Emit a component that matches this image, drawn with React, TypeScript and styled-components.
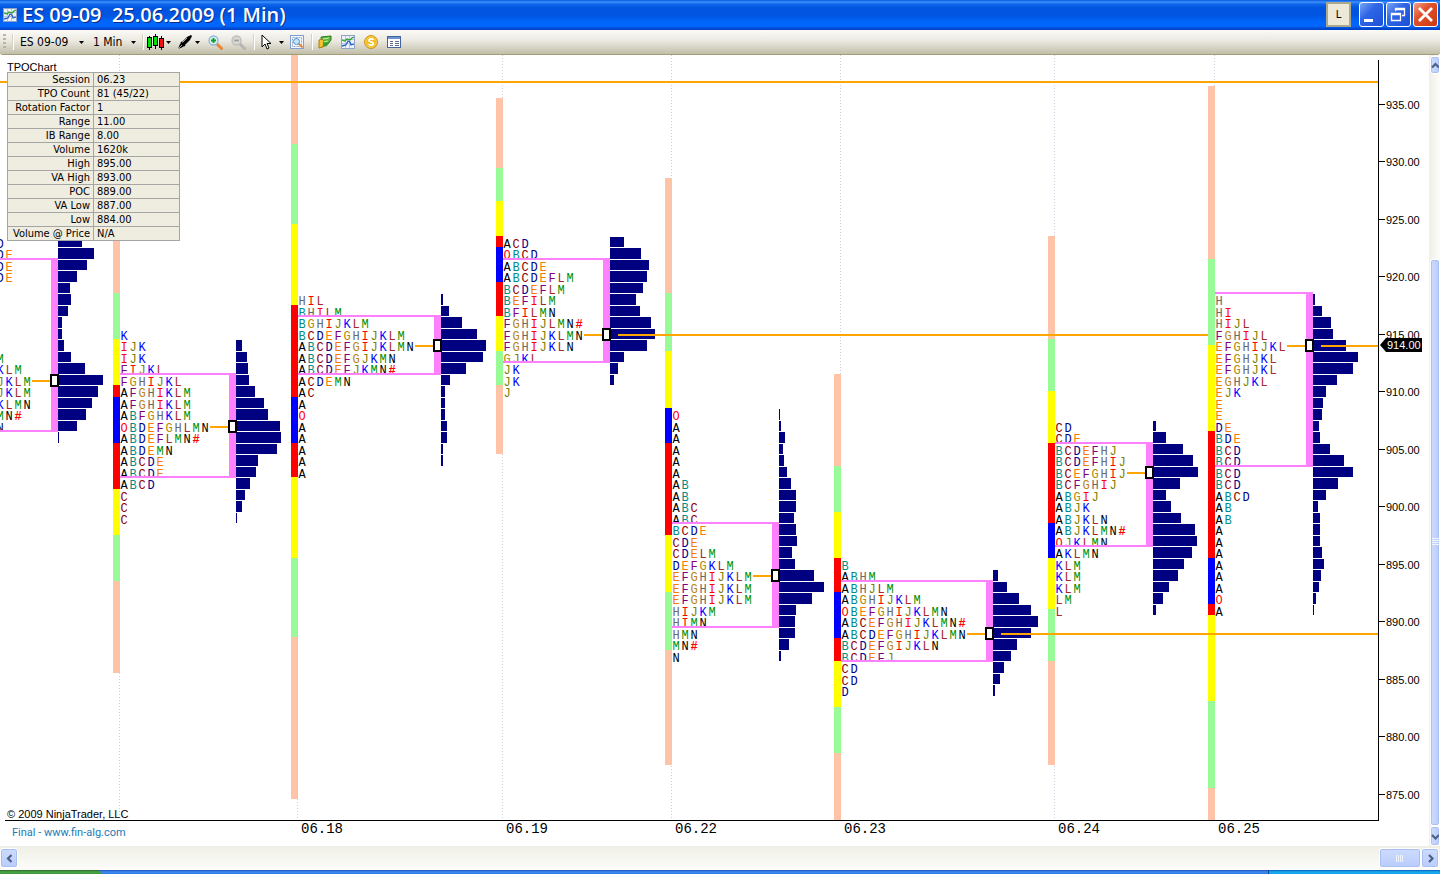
import React from "react";
import styled, { createGlobalStyle } from "styled-components";

const GlobalStyle = createGlobalStyle`
  *, *::before, *::after { box-sizing: border-box; }
  html, body { margin: 0; padding: 0; }
  body { background: #fff; font-family: "DejaVu Sans Condensed", "Noto Sans", sans-serif; font-size: 11px; color: #000; }
  button, select { font: inherit; color: inherit; border: 0; padding: 0; margin: 0; background: none; }
`;

/* ---------- data ---------- */

type Band = "s" | "g" | "y" | "r" | "b";

interface Session {
  date: string;
  stripX: number;
  stripTop: number;
  strip: [Band, number][];
  letterX: number;
  letterTop: number;
  letters: string[];
  volumeX: number;
  volumeTop: number;
  volume: number[];
  vaHigh: number;
  vaLow: number;
  poc: number;
  extendTo?: string;
}

const BAND_FILL: Record<Band, string> = {
  s: "#ffc4a8",
  g: "#98fb98",
  y: "#ffff00",
  r: "#ff0000",
  b: "#0000ff",
};

const LETTER_FILL: Record<string, string> = {
  A: "#000000",
  B: "#008b8b",
  C: "#8b0000",
  D: "#00008b",
  E: "#f57c00",
  F: "#800080",
  G: "#b8860b",
  H: "#696969",
  I: "#ff0000",
  J: "#808000",
  K: "#0000ff",
  L: "#a52a2a",
  M: "#009000",
  N: "#000000",
  O: "#ff0000",
  "#": "#ff0000",
};

const SESSIONS: Session[] = [
  {
    date: "",
    stripX: -60,
    stripTop: 60,
    strip: [],
    letterX: -3,
    letterTop: 923,
    letters: ["D", "DE", "DE", "DE", "", "", "", "", "", "", "M", "KLM", "JKLM", "JKLM", "KLMN", "MN#", "N"],
    volumeX: 58,
    volumeTop: 923,
    volume: [24, 36, 29, 19, 12, 13, 10, 4, 4, 6, 13, 27, 45, 40, 34, 28, 19, 1],
    vaHigh: 921,
    vaLow: 907,
    poc: 911,
  },
  {
    date: "",
    stripX: 113,
    stripTop: 200,
    strip: [["s", 293], ["g", 339], ["y", 385], ["r", 397], ["b", 443], ["r", 489], ["y", 535], ["g", 581], ["s", 673]],
    letterX: 121,
    letterTop: 915,
    letters: ["K", "IJK", "IJK", "FIJKL", "FGHIJKL", "AFGHIKLM", "AFGHIKLM", "ABFGHKLM", "OBDEFGHLMN", "ABDEFLMN#", "ABDEMN", "ABCDE", "ABCDE", "ABCD", "C", "C", "C"],
    volumeX: 236,
    volumeTop: 914,
    volume: [6, 11, 12, 13, 19, 28, 32, 44, 45, 41, 22, 20, 14, 9, 6, 1],
    vaHigh: 911,
    vaLow: 903,
    poc: 907,
  },
  {
    date: "06.18",
    stripX: 291,
    stripTop: 55,
    strip: [["s", 144], ["g", 224], ["y", 305], ["r", 397], ["b", 443], ["r", 477], ["y", 558], ["g", 637], ["s", 799]],
    letterX: 299,
    letterTop: 918,
    letters: ["HIL", "BHILM", "BGHIJKLM", "BCDEFGHIJKLM", "ABCDEFGIJKLMN", "ABCDEFGJKMN", "ABCDEFJKMN#", "ACDEMN", "AC", "A", "O", "A", "A", "A", "A", "A"],
    volumeX: 441,
    volumeTop: 918,
    volume: [2, 8, 21, 36, 45, 42, 25, 9, 4, 4, 4, 6, 6, 2, 2],
    vaHigh: 916,
    vaLow: 912,
    poc: 914,
  },
  {
    date: "06.19",
    stripX: 496,
    stripTop: 98,
    strip: [["s", 168], ["g", 201], ["y", 236], ["r", 247], ["b", 282], ["r", 316], ["y", 351], ["g", 385], ["s", 454]],
    letterX: 504,
    letterTop: 923,
    letters: ["ACD", "OBCD", "ABCDE", "ABCDEFLM", "BCDEFLM", "BEFILM", "BFILMN", "FGHIJLMN#", "FGHIJKLMN", "FGHIJKLN", "GJKL", "JK", "JK", "J"],
    volumeX: 610,
    volumeTop: 923,
    volume: [14, 31, 39, 37, 33, 26, 30, 41, 45, 37, 14, 8, 4],
    vaHigh: 921,
    vaLow: 913,
    poc: 915,
    extendTo: "1208",
  },
  {
    date: "06.22",
    stripX: 665,
    stripTop: 178,
    strip: [["s", 293], ["g", 351], ["y", 408], ["b", 443], ["r", 535], ["y", 592], ["g", 650], ["s", 765]],
    letterX: 673,
    letterTop: 908,
    letters: ["O", "A", "A", "A", "A", "A", "AB", "AB", "ABC", "ABC", "BCDE", "CDE", "CDELM", "DEFGKLM", "EFGHIJKLM", "EFGHIJKLM", "EFGHIJKLM", "HIJKM", "HIMN", "HMN", "MN#", "N"],
    volumeX: 779,
    volumeTop: 908,
    volume: [1, 2, 6, 4, 5, 8, 12, 17, 17, 15, 17, 18, 13, 16, 35, 45, 33, 17, 16, 16, 10, 2],
    vaHigh: 898,
    vaLow: 890,
    poc: 894,
  },
  {
    date: "06.23",
    stripX: 834,
    stripTop: 374,
    strip: [["s", 466], ["g", 512], ["y", 558], ["r", 592], ["b", 638], ["r", 661], ["y", 707], ["g", 753], ["s", 820]],
    letterX: 842,
    letterTop: 895,
    letters: ["B", "ABHM", "ABHJLM", "ABGHIJKLM", "OBEFGHIJKLMN", "ABCEFGHIJKLMN#", "ABCDEFGHIJKLMN", "BCDEFGIJKLN", "BCDEFJ", "CD", "CD", "D"],
    volumeX: 993,
    volumeTop: 894,
    volume: [5, 14, 26, 38, 45, 38, 24, 18, 11, 7, 2],
    vaHigh: 893,
    vaLow: 887,
    poc: 889,
    extendTo: "100%",
  },
  {
    date: "06.24",
    stripX: 1048,
    stripTop: 236,
    strip: [["s", 339], ["g", 391], ["y", 443], ["r", 523], ["b", 558], ["y", 609], ["g", 661], ["s", 765]],
    letterX: 1056,
    letterTop: 907,
    letters: ["CD", "CDE", "BCDEFHJ", "BCDEFHIJ", "BCEFGHIJ", "BCFGHIJ", "ABGIJ", "ABJK", "ABJKLN", "ABJKLMN#", "OJKLMN", "AKLMN", "KLM", "KLM", "KLM", "LM", "L"],
    volumeX: 1153,
    volumeTop: 907,
    volume: [3, 13, 30, 40, 45, 27, 13, 18, 28, 42, 44, 39, 31, 25, 16, 10, 3],
    vaHigh: 905,
    vaLow: 897,
    poc: 903,
  },
  {
    date: "06.25",
    stripX: 1208,
    stripTop: 86,
    strip: [["s", 259], ["g", 345], ["y", 431], ["r", 558], ["b", 604], ["r", 615], ["y", 701], ["g", 788], ["s", 820]],
    letterX: 1216,
    letterTop: 918,
    letters: ["H", "HI", "HIJL", "FGHIJL", "EFGHIJKL", "EFGHJKL", "EFGHJKL", "EGHJKL", "EJK", "E", "E", "DE", "BDE", "BCD", "BCD", "BCD", "BCD", "ABCD", "AB", "AB", "A", "A", "A", "A", "A", "A", "O", "A"],
    volumeX: 1313,
    volumeTop: 918,
    volume: [2, 9, 18, 20, 33, 45, 40, 24, 13, 10, 9, 6, 7, 17, 31, 40, 25, 13, 5, 7, 7, 7, 9, 11, 8, 6, 3, 1],
    vaHigh: 918,
    vaLow: 904,
    poc: 914,
    extendTo: "100%",
  },
];

const STATS: [string, string][] = [
  ["Session", "06.23"],
  ["TPO Count", "81 (45/22)"],
  ["Rotation Factor", "1"],
  ["Range", "11.00"],
  ["IB Range", "8.00"],
  ["Volume", "1620k"],
  ["High", "895.00"],
  ["VA High", "893.00"],
  ["POC", "889.00"],
  ["VA Low", "887.00"],
  ["Low", "884.00"],
  ["Volume @ Price", "N/A"],
];

const PRICES = [935, 930, 925, 920, 915, 910, 905, 900, 895, 890, 885, 880, 875];

const HEADER = 55;
const CELL = 9;
const rowTop = (price: number) => Math.round(340.25 + (914 - price) * 11.5);

/* ---------- window frame ---------- */

const Window = styled.div`
  display: grid;
  grid-template-rows: 30px 25px minmax(0, 1fr) 24px 4px;
  height: 100vh;
  overflow: hidden;
`;

const TitleBar = styled.header`
  display: flex;
  align-items: center;
  gap: 2px;
  padding: 0 2px 1px 3px;
  background: linear-gradient(#0a55dc 0, #3a93ff 2px, #1267ea 4px, #0054df 8px, #0054e0 15px, #0066fb 22px, #0067ff 26px, #0050d8 28px, #003cc0 30px);
  color: #fff;
`;

const Title = styled.h1`
  flex: 1;
  margin: 0 0 0 3px;
  font: 600 20px/30px "Open Sans", "Noto Sans", sans-serif;
  white-space: pre;
  text-shadow: 1px 1px 0 #0a2a8c;
`;

const LinkButton = styled.button`
  width: 25px;
  height: 25px;
  margin-right: 6px;
  border: 2px solid #aca78f;
  background: #ece9d8;
  color: #000;
`;

const CaptionButton = styled.button<{ $danger?: boolean }>`
  display: grid;
  place-items: center;
  width: 25px;
  height: 25px;
  border: 1px solid #fff;
  border-radius: 3px;
  background: ${(p) =>
    p.$danger
      ? "linear-gradient(135deg, #f0a18a, #e0512b 40%, #c93a12)"
      : "linear-gradient(135deg, #7aa5f5, #2f66e6 40%, #1c4fd6)"};
`;

const Toolbar = styled.div`
  display: flex;
  align-items: center;
  padding-left: 3px;
  border-bottom: 1px solid #a09d78;
  border-radius: 0 0 3px 3px;
  background: linear-gradient(#fbfaf7, #ebe9e0 45%, #c1bea9);
`;

const Grip = styled.span`
  width: 3px;
  height: 16px;
  background: repeating-linear-gradient(#b9b6a4 0 2px, transparent 2px 4px);
`;

const Separator = styled.span<{ $before?: number; $after?: number }>`
  width: 1px;
  height: 16px;
  margin: 0 ${(p) => p.$after ?? 4}px 0 ${(p) => p.$before ?? 7}px;
  background: #fff;
  box-shadow: -1px 0 0 #d5d2c2;
`;

const Picker = styled.label<{ $width: number; $after?: number }>`
  display: grid;
  grid-template-columns: minmax(0, 1fr);
  align-items: center;
  width: ${(p) => p.$width}px;
  margin-right: ${(p) => p.$after ?? 0}px;
  font-size: 12px;
  select, svg { grid-area: 1 / 1; }
  select { appearance: none; outline: 0; height: 18px; line-height: 18px; }
  svg { justify-self: end; pointer-events: none; }
`;

const ToolButton = styled.button<{ $after?: number }>`
  display: flex;
  align-items: center;
  gap: 2px;
  margin-right: ${(p) => p.$after ?? 7}px;
  svg { display: block; }
`;

const Body = styled.main`
  display: grid;
  grid-template-columns: minmax(0, 1fr) 11px;
  min-height: 0;
`;

/* ---------- chart ---------- */

const ChartPane = styled.section`
  display: grid;
  grid-template-columns: minmax(0, 1fr) 51px;
  grid-template-rows: minmax(0, 1fr) 26px;
  min-height: 0;
  background: #fff;
`;

const PlotCell = styled.div`
  position: relative;
  min-height: 0;
  overflow: hidden;
`;

const PlotSvg = styled.svg`
  display: block;
  width: 100%;
  height: 100%;
`;

const AxisSvg = styled.svg`
  display: block;
  grid-area: 1 / 2 / 3 / 3;
  width: 100%;
  height: 100%;
  font: 11px "Liberation Sans", Arial, sans-serif;
`;

const DateCell = styled.div`
  display: grid;
  grid-template-columns: minmax(0, 1fr);
  svg, a { grid-area: 1 / 1; }
`;

const DateSvg = styled.svg`
  width: 100%;
  height: 26px;
  font: 14px "Liberation Mono", "Courier New", monospace;
`;

const SiteLink = styled.a`
  justify-self: start;
  align-self: center;
  padding-left: 12px;
  color: #1a7ab8;
  font: 11px/14px Roboto, "Liberation Sans", sans-serif;
  text-decoration: none;
`;

const StudyPanel = styled.div`
  position: absolute;
  top: 5px;
  left: 7px;
`;

const StudyName = styled.div`
  font: 11px/15px "Liberation Sans", Arial, sans-serif;
  height: 12px;
`;

const StatTable = styled.table`
  width: 173px;
  border-collapse: collapse;
  table-layout: fixed;
  background: #efede0;
  th, td {
    height: 14px;
    padding: 0 3px;
    border: 1px solid #a5a5a5;
    font-weight: 400;
    line-height: 13px;
    white-space: nowrap;
  }
  th { width: 86px; text-align: right; }
  td { text-align: left; }
`;

const Copyright = styled.small`
  position: absolute;
  left: 7px;
  bottom: 0;
  font: 11px/11px "Liberation Sans", Arial, sans-serif;
`;

/* ---------- scroll bars and task bar ---------- */

const VTrack = styled.div`
  display: flex;
  flex-direction: column;
  padding: 1px 0 0 1px;
  background: linear-gradient(90deg, #efeee8, #fdfdfa);
`;

const HTrack = styled.div`
  display: flex;
  padding: 2px 1px 2px 0;
  background: linear-gradient(#efeee6, #fdfdfb);
`;

const ScrollPart = styled.button<{ $vertical?: boolean; $size?: number }>`
  display: grid;
  place-items: center;
  flex: none;
  ${(p) => (p.$vertical ? "height" : "width")}: ${(p) => p.$size ?? 18}px;
  overflow: hidden;
  border: 1px solid #fff;
  border-radius: 3px;
  background: linear-gradient(${(p) => (p.$vertical ? "90deg" : "180deg")}, #cddbff, #b9ccfb);
  box-shadow: inset 0 0 0 1px #a9bff0;
`;

const VThumb = styled(ScrollPart)`
  flex: 567 1 0;
  height: auto;
`;

const Space = styled.span<{ $grow: number }>`
  flex: ${(p) => p.$grow} 1 0;
`;

const TaskBar = styled.footer`
  display: flex;
  background: linear-gradient(#1c4fb8, #3f8cf0 2px, #2f75e0);
`;

const StartEdge = styled.span`
  width: 101px;
  border-top-right-radius: 4px;
  background: linear-gradient(#2c6a2c, #4aa447 2px, #3d963c);
`;

const TrayEdge = styled.span`
  width: 172px;
  margin-left: auto;
  border-left: 1px solid #0a3c8c;
  background: linear-gradient(#0c59b9, #17b0f0 2px, #129ee8);
`;

/* ---------- icons ---------- */

const Caret = () => (
  <svg width="5" height="3" viewBox="0 0 5 3"><path d="M0 0h5L2.500 3z" fill="#000" /></svg>
);

const ChartIcon = () => (
  <svg width="14" height="14" viewBox="0 0 14 14">
    <rect x=".5" y=".5" width="13" height="13" fill="#eef3fb" stroke="#8fa3c8" />
    <path d="M4.500 1v12M8.500 1v12M1 4.500h12M1 8.500h12" stroke="#b9c7e2" />
    <path d="M1 5l3 1 2-2 3 1 2-2 2-1" fill="none" stroke="#2aa02a" strokeWidth="1.300" />
    <path d="M1 11l4-1 2-4 2 1 1 3 3-1" fill="none" stroke="#2d62c4" strokeWidth="1.300" />
  </svg>
);

const CandleIcon = () => (
  <svg width="17" height="16" viewBox="0 0 17 16" shapeRendering="crispEdges">
    <path d="M2.500 2v14M8.500 0v15M14.500 2v14" stroke="#000" />
    <rect x=".5" y="3.500" width="4" height="10" fill="#00e000" stroke="#000" />
    <rect x="6.500" y="2.500" width="4" height="9" fill="#00e000" stroke="#000" />
    <rect x="12.500" y="4.500" width="4" height="9" fill="#f01010" stroke="#000" />
  </svg>
);

const PenIcon = () => (
  <svg width="16" height="16" viewBox="0 0 16 16">
    <path d="M1 15l2-5 7-7 4-2 1 1-2 4-7 7z" fill="#000" />
    <path d="M5 9l5-5M1 15l4-4" stroke="#cfcfcf" strokeWidth=".8" />
    <path d="M4 8l4 4" stroke="#000" strokeWidth="1.500" />
  </svg>
);

const ZoomIcon = ({ off }: { off?: boolean }) => (
  <svg width="15" height="15" viewBox="0 0 15 15">
    <path d="M9 9l4.500 4.500" stroke={off ? "#b5b5b5" : "#e8873a"} strokeWidth="3" strokeLinecap="round" />
    <circle cx="5.500" cy="5.500" r="4.500" fill={off ? "#d9d9d6" : "#d8f3ee"} stroke={off ? "#bcbcba" : "#8fb6dc"} strokeWidth="1.300" />
    <path d={off ? "M3 5.500h5" : "M3 5.500h5M5.500 3v5"} stroke={off ? "#a0a09e" : "#109a30"} strokeWidth="1.800" />
  </svg>
);

const PointerIcon = () => (
  <svg width="11" height="16" viewBox="0 0 11 16">
    <path d="M1 1v12l3-3 2 5 2-1-2-4.500h4z" fill="#fff" stroke="#000" />
  </svg>
);

const RegionIcon = () => (
  <svg width="14" height="14" viewBox="0 0 14 14">
    <rect x=".5" y=".5" width="13" height="13" fill="#f4f8fe" stroke="#7f9fd0" />
    <path d="M2.500 2.500h9v9h-9z" fill="none" stroke="#98a8c4" strokeDasharray="2 1" />
    <path d="M8.500 8.500l4 4" stroke="#e8873a" strokeWidth="2" />
    <circle cx="6.500" cy="6.500" r="3" fill="#bfe6fa" stroke="#4c8fd0" />
  </svg>
);

const OrdersIcon = () => (
  <svg width="14" height="14" viewBox="0 0 14 14">
    <path d="M3 2l10-1v4l-3 4-6 1z" fill="#5cb83c" stroke="#2c7d1c" />
    <path d="M1 5l3-1 2 2-1 6-4 1z" fill="#f2c230" stroke="#a87a10" />
    <path d="M5 7h6l-2 4-4 1z" fill="#3f9e2a" />
    <path d="M5 4l6-1M6 7l4-1" stroke="#c9f0b0" />
  </svg>
);

const CoinIcon = () => (
  <svg width="14" height="14" viewBox="0 0 14 14">
    <circle cx="7" cy="7" r="6.400" fill="#f4bb1c" stroke="#c48a08" />
    <circle cx="7" cy="7" r="5.400" fill="none" stroke="#fbdc78" strokeWidth=".7" />
    <path d="M9.300 4.800C8.800 3.600 5 3.500 5 5.400 5 7.200 9.300 6.700 9.300 8.600 9.300 10.500 5.200 10.400 4.800 9.100" fill="none" stroke="#fff" strokeWidth="1.800" />
  </svg>
);

const ListIcon = () => (
  <svg width="14" height="14" viewBox="0 0 14 14" shapeRendering="crispEdges">
    <rect x=".5" y="1.500" width="13" height="11" fill="#fff" stroke="#44659c" />
    <path d="M1 2h12v2H1z" fill="#6f93cf" />
    <path d="M3 6.500h3M3 8.500h3M3 10.500h3M8 6.500h4M8 8.500h4M8 10.500h4" stroke="#5f6f8c" />
  </svg>
);

const Chevron = ({ d }: { d: string }) => (
  <svg width="9" height="9" viewBox="0 0 9 9"><path d={d} fill="none" stroke="#4d6185" strokeWidth="2.200" /></svg>
);

/* ---------- chart parts ---------- */

const Profile = ({ s }: { s: Session }) => {
  const vaX = s.volumeX - 7;
  const vaTop = rowTop(s.vaHigh) - 2;
  const vaBottom = rowTop(s.vaLow - 1);
  const left = s.letterX - 1;
  const pocTop = rowTop(s.poc);
  const pocLetters = s.letters[s.letterTop - s.poc].length;
  let bandTop = s.stripTop;
  return (
    <g>
      <line x1={s.stripX + 6.5} x2={s.stripX + 6.5} y1={HEADER} y2={820} stroke="#c6d2e0" strokeDasharray="1 2" />
      {s.strip.map(([band, end], i) => {
        const y = bandTop;
        bandTop = end;
        return <rect key={i} x={s.stripX} y={y} width={7} height={end - y} fill={BAND_FILL[band]} />;
      })}
      {s.letters.map((row, r) => (
        <text key={r} y={rowTop(s.letterTop - r) + 11} textAnchor="middle">
          {row.split("").map((ch, c) => (
            <tspan key={c} x={s.letterX + 3 + c * CELL} fill={LETTER_FILL[ch]} fontWeight={ch === "#" ? 700 : 400}>
              {ch}
            </tspan>
          ))}
        </text>
      ))}
      {s.volume.map((w, r) => {
        const y = rowTop(s.volumeTop - r);
        return <rect key={r} x={s.volumeX} y={y} width={w} height={rowTop(s.volumeTop - r - 1) - y - 1} fill="#000080" />;
      })}
      <rect x={left} y={vaTop} width={vaX - left} height={2} fill="#ff80ff" />
      <rect x={left} y={vaBottom - 2} width={vaX - left} height={2} fill="#ff80ff" />
      <rect x={vaX} y={vaTop} width={7} height={vaBottom - vaTop} fill="#ff80ff" />
      <line x1={s.letterX + pocLetters * CELL - 1} x2={vaX} y1={pocTop + 6} y2={pocTop + 6} stroke="#ffa500" strokeWidth={2} />
      <rect x={vaX} y={pocTop} width={7} height={11} fill="#fff" stroke="#000" strokeWidth={2} />
    </g>
  );
};

const Plot = () => (
  <PlotSvg role="img" aria-label="TPO chart, ES 09-09">
    <g transform={`translate(0 ${-HEADER})`} shapeRendering="crispEdges" fontFamily='"Liberation Mono", "Courier New", monospace' fontSize={12}>
      {SESSIONS.map((s) => (
        <Profile key={s.stripX} s={s} />
      ))}
      <line x1="0" x2="100%" y1="82" y2="82" stroke="#ffa500" strokeWidth={2} />
      {SESSIONS.filter((s) => s.extendTo).map((s) => (
        <line key={s.stripX} x1={s.volumeX + 8} x2={s.extendTo} y1={rowTop(s.poc) + 6} y2={rowTop(s.poc) + 6} stroke="#ffa500" strokeWidth={2} />
      ))}
    </g>
  </PlotSvg>
);

const PriceAxis = () => (
  <AxisSvg role="img" aria-label="Price axis">
    <g transform={`translate(0 ${-HEADER})`}>
      <rect x="0" y="60" width="1" height="761" />
      {PRICES.map((p) => {
        const y = rowTop(p) + 5;
        return (
          <g key={p}>
            <rect x="1" y={y} width="6" height="1" />
            <text x="8" y={y + 5}>{p.toFixed(2)}</text>
          </g>
        );
      })}
      <path d="M2 345l6-7h36v14H8z" />
      <text x="9" y="349" fill="#fff">914.00</text>
    </g>
  </AxisSvg>
);

export default function App() {
  return (
    <>
      <GlobalStyle />
      <Window>
        <TitleBar>
          <ChartIcon />
          <Title>{"ES 09-09  25.06.2009 (1 Min)"}</Title>
          <LinkButton type="button">L</LinkButton>
          <CaptionButton type="button" aria-label="Minimize">
            <svg width="17" height="17" viewBox="0 0 17 17"><path d="M1 13h9v3H1z" fill="#fff" /></svg>
          </CaptionButton>
          <CaptionButton type="button" aria-label="Restore">
            <svg width="17" height="17" viewBox="0 0 17 17">
              <path d="M5.500 5V2.500h9v7H12M5 3.500h10M1.500 7.500h9v7h-9zM1 8.500h10" fill="none" stroke="#fff" strokeWidth="1.300" />
            </svg>
          </CaptionButton>
          <CaptionButton type="button" aria-label="Close" $danger>
            <svg width="17" height="17" viewBox="0 0 17 17"><path d="M2 2l13 13M15 2L2 15" stroke="#fff" strokeWidth="2.800" /></svg>
          </CaptionButton>
        </TitleBar>

        <Toolbar role="toolbar">
          <Grip />
          <Separator $after={6} />
          <Picker $width={64} $after={9}>
            <select aria-label="Instrument"><option>ES 09-09</option></select>
            <Caret />
          </Picker>
          <Picker $width={43}>
            <select aria-label="Interval"><option>1 Min</option></select>
            <Caret />
          </Picker>
          <Separator $after={3} />
          <ToolButton type="button" aria-label="Chart style" $after={6}><CandleIcon /><Caret /></ToolButton>
          <ToolButton type="button" aria-label="Draw" $after={8}><PenIcon /><Caret /></ToolButton>
          <ToolButton type="button" aria-label="Zoom in" $after={8}><ZoomIcon /></ToolButton>
          <ToolButton type="button" aria-label="Zoom out" $after={1}><ZoomIcon off /></ToolButton>
          <Separator $after={6} />
          <ToolButton type="button" aria-label="Pointer" $after={6}><PointerIcon />&nbsp;<Caret /></ToolButton>
          <ToolButton type="button" aria-label="Zoom to region" $after={1}><RegionIcon /></ToolButton>
          <Separator $after={5} />
          <ToolButton type="button" aria-label="Orders" $after={9}><OrdersIcon /></ToolButton>
          <ToolButton type="button" aria-label="Indicators" $after={9}><ChartIcon /></ToolButton>
          <ToolButton type="button" aria-label="Strategies" $after={9}><CoinIcon /></ToolButton>
          <ToolButton type="button" aria-label="Properties"><ListIcon /></ToolButton>
        </Toolbar>

        <Body>
          <ChartPane>
            <PlotCell>
              <Plot />
              <StudyPanel>
                <StudyName>TPOChart</StudyName>
                <StatTable>
                  <tbody>
                    {STATS.map(([name, value]) => (
                      <tr key={name}>
                        <th scope="row">{name}</th>
                        <td>{value}</td>
                      </tr>
                    ))}
                  </tbody>
                </StatTable>
              </StudyPanel>
              <Copyright>© 2009 NinjaTrader, LLC</Copyright>
            </PlotCell>
            <PriceAxis />
            <DateCell>
              <DateSvg>
                <line x1="5" x2="100%" y1=".5" y2=".5" stroke="#000" />
                {SESSIONS.filter((s) => s.date).map((s) => (
                  <text key={s.date} x={s.stripX + 10} y="13">{s.date}</text>
                ))}
              </DateSvg>
              <SiteLink href="#">Final - www.fin-alg.com</SiteLink>
            </DateCell>
          </ChartPane>
          <VTrack>
            <ScrollPart type="button" aria-label="Scroll up" $vertical><Chevron d="M1 6.500L4.500 3 8 6.500" /></ScrollPart>
            <Space $grow={185} />
            <VThumb type="button" aria-label="Vertical position" $vertical>
              <svg width="7" height="8" viewBox="0 0 7 8"><path d="M0 .5h7M0 2.500h7M0 4.500h7M0 6.500h7" stroke="#eef4fe" /></svg>
            </VThumb>
            <ScrollPart type="button" aria-label="Scroll down" $vertical $size={20}><Chevron d="M1 3L4.500 6.500 8 3" /></ScrollPart>
          </VTrack>
        </Body>

        <HTrack>
          <ScrollPart type="button" aria-label="Scroll left"><Chevron d="M6.500 1L3 4.500 6.500 8" /></ScrollPart>
          <Space $grow={1} />
          <ScrollPart type="button" aria-label="Horizontal position" $size={42}>
            <svg width="8" height="7" viewBox="0 0 8 7"><path d="M.5 0v7M2.500 0v7M4.500 0v7M6.500 0v7" stroke="#eef4fe" /></svg>
          </ScrollPart>
          <ScrollPart type="button" aria-label="Scroll right"><Chevron d="M3 1l3.500 3.500L3 8" /></ScrollPart>
        </HTrack>

        <TaskBar>
          <StartEdge />
          <TrayEdge />
        </TaskBar>
      </Window>
    </>
  );
}
